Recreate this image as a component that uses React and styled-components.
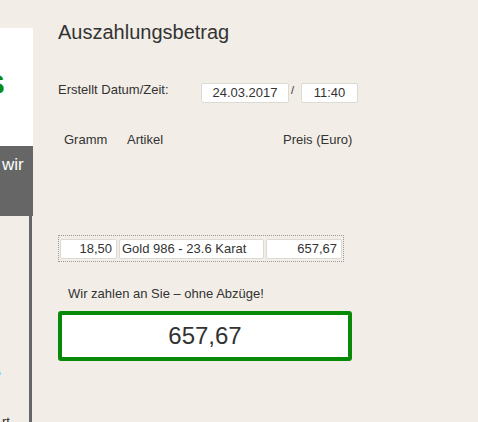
import React from "react";
import styled, { createGlobalStyle } from "styled-components";

const GlobalStyle = createGlobalStyle`
  html, body {
    margin: 0;
    padding: 0;
    height: 100%;
    overflow: hidden;
    background: #f2eee7;
    font-family: "Liberation Sans", Arial, sans-serif;
    color: #333;
  }
`;

const Page = styled.div`
  display: flex;
  height: 100vh;
  overflow: hidden;
`;

const Sidebar = styled.aside`
  width: 33px;
  flex-shrink: 0;
  display: flex;
  flex-direction: column;
  padding-top: 28px;
  overflow: hidden;
`;

const Brand = styled.div`
  flex-shrink: 0;
  height: 118px;
  background: #fff;
  overflow: hidden;
`;

const BrandMark = styled.div`
  margin: 41px 0 0 -14px;
  font-size: 28px;
  font-weight: bold;
  color: #0a8c0a;
  white-space: nowrap;
`;

const Teaser = styled.div`
  flex-shrink: 0;
  height: 70px;
  background: #666;
  color: #fff;
  font-size: 17px;
  padding: 9px 0 0 2px;
  box-sizing: border-box;
  overflow: hidden;
  white-space: nowrap;
`;

const Rail = styled.div`
  flex: 1 0 auto;
  margin-right: 1px;
  border-right: 3px solid #666;
  display: flex;
  flex-direction: column;
`;

const Dot = styled.span`
  flex-shrink: 0;
  width: 1px;
  height: 3px;
  margin-top: 156px;
  background: #7fe3ff;
`;

const RailText = styled.span`
  flex-shrink: 0;
  margin: 39px 0 0 2px;
  font-size: 13px;
  line-height: 15px;
  color: #333;
`;

const Main = styled.main`
  padding: 21px 0 0 25px;
  width: 340px;
  display: flex;
  flex-direction: column;
`;

const Title = styled.h1`
  margin: 0;
  font-size: 20px;
  font-weight: normal;
  line-height: 23px;
`;

const MetaRow = styled.div`
  display: flex;
  align-items: flex-start;
  margin-top: 39px;
  font-size: 13px;
`;

const Label = styled.span`
  flex-shrink: 0;
  margin-top: -1px;
  width: 143px;
`;

const Field = styled.div`
  flex-shrink: 0;
  box-sizing: border-box;
  height: 20px;
  width: ${({ w }) => w}px;
  background: #fff;
  border: 1px solid #dcdad5;
  border-radius: 2px;
  font-size: 13px;
  line-height: 18px;
  text-align: ${({ align }) => align || "center"};
  padding: 0 ${({ pad }) => pad || 0}px;
  white-space: nowrap;
`;

const Slash = styled.span`
  flex-shrink: 0;
  width: 12px;
  font-size: 11px;
  line-height: 11px;
  padding: 2px 0 0 2px;
  box-sizing: border-box;
`;

const HeadRow = styled.div`
  display: grid;
  grid-template-columns: 63px 156px auto;
  padding-left: 6px;
  margin-top: 29px;
  font-size: 13px;
  line-height: 15px;
  white-space: nowrap;
`;

const ItemBox = styled.div`
  margin-top: 88px;
  width: 286px;
  box-sizing: border-box;
  border: 1px dotted #9a9a9a;
  padding: 3px 1px 2px 1px;
  display: flex;
  gap: 2px;
`;

const Note = styled.p`
  margin: 24px 0 0 10px;
  font-size: 13px;
  line-height: 15px;
`;

const Total = styled.div`
  margin-top: 10px;
  width: 294px;
  box-sizing: border-box;
  height: 50px;
  border: 4px solid #088a08;
  border-radius: 3px;
  background: #fff;
  font-size: 24px;
  display: flex;
  align-items: center;
  justify-content: center;
`;

const App = () => (
  <>
    <GlobalStyle />
    <Page>
      <Sidebar>
        <Brand>
          <BrandMark>S</BrandMark>
        </Brand>
        <Teaser>wir</Teaser>
        <Rail>
          <Dot />
          <RailText>rt</RailText>
        </Rail>
      </Sidebar>
      <Main>
        <Title>Auszahlungsbetrag</Title>
        <MetaRow>
          <Label>Erstellt Datum/Zeit:</Label>
          <Field w={88}>24.03.2017</Field>
          <Slash>/</Slash>
          <Field w={57}>11:40</Field>
        </MetaRow>
        <HeadRow>
          <span>Gramm</span>
          <span>Artikel</span>
          <span>Preis (Euro)</span>
        </HeadRow>
        <ItemBox>
          <Field w={57} align="right" pad={4}>18,50</Field>
          <Field w={145} align="left" pad={2}>Gold 986 - 23.6 Karat</Field>
          <Field w={76} align="right" pad={4}>657,67</Field>
        </ItemBox>
        <Note>Wir zahlen an Sie – ohne Abzüge!</Note>
        <Total>657,67</Total>
      </Main>
    </Page>
  </>
);

export default App;
